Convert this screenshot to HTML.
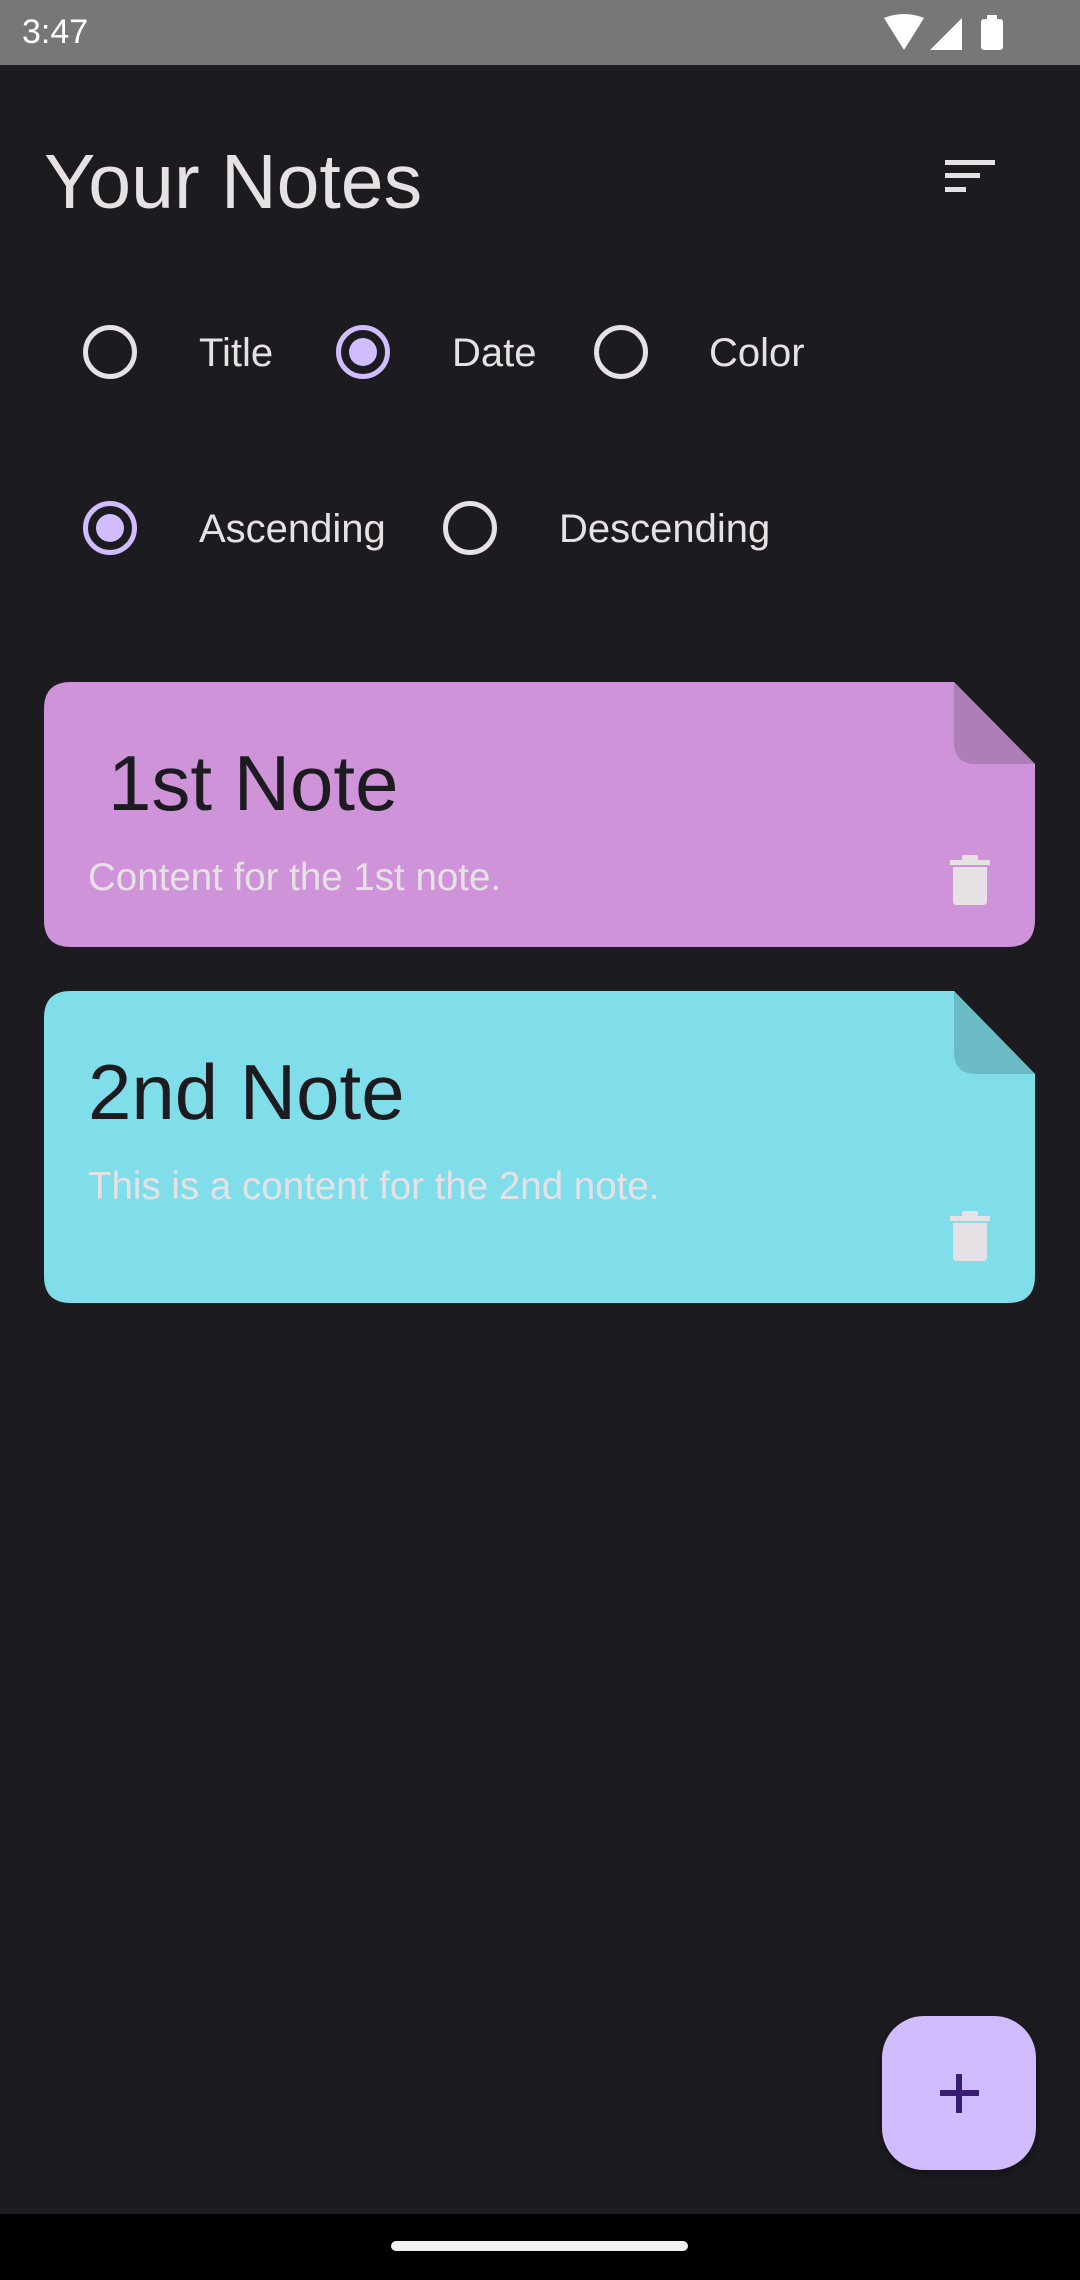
<!DOCTYPE html>
<html><head><meta charset="utf-8"><style>
*{margin:0;padding:0;box-sizing:border-box}
body{width:1080px;height:2280px;background:#1c1b1f;position:relative;overflow:hidden;font-family:"Liberation Sans",sans-serif}
.a{position:absolute}
.t{white-space:nowrap;line-height:1}
.radio{position:absolute;width:54px;height:54px;border-radius:50%;border:5px solid #e6e1e5}
.radio.on{border-color:#d0bcff}
.radio.on::after{content:"";position:absolute;left:8px;top:8px;width:28px;height:28px;border-radius:50%;background:#d0bcff}
.lbl{position:absolute;color:#e6e1e5;font-size:40px;white-space:nowrap;line-height:1}
</style></head><body>
<div class="a" style="left:0;top:0;width:1080px;height:65px;background:#777"></div>
<div class="a t" style="left:22px;top:15px;font-size:34px;color:#fff">3:47</div>
<svg class="a" style="left:880px;top:14px" width="130" height="38" viewBox="0 0 130 38">
<path d="M4 4 Q24 -4 44 4 L24 36 Z" fill="#fff"/>
<path d="M82 4 L82 36 L50 36 Z" fill="#fff"/>
<rect x="101" y="5" width="22" height="31" rx="3" fill="#fff"/><rect x="107" y="1" width="10" height="5" fill="#fff"/>
</svg>
<div class="a t" style="left:44px;top:144px;font-size:77px;color:#e6e1e5">Your Notes</div>
<div class="a" style="left:945px;top:160px;width:50px;height:5px;background:#e6e1e5"></div>
<div class="a" style="left:945px;top:173px;width:35px;height:5px;background:#e6e1e5"></div>
<div class="a" style="left:945px;top:187px;width:21px;height:5px;background:#e6e1e5"></div>

<div class="radio" style="left:83px;top:325px"></div><div class="lbl" style="left:199px;top:333px">Title</div>
<div class="radio on" style="left:336px;top:325px"></div><div class="lbl" style="left:452px;top:333px">Date</div>
<div class="radio" style="left:594px;top:325px"></div><div class="lbl" style="left:709px;top:333px">Color</div>
<div class="radio on" style="left:83px;top:501px"></div><div class="lbl" style="left:199px;top:509px">Ascending</div>
<div class="radio" style="left:443px;top:501px"></div><div class="lbl" style="left:559px;top:509px">Descending</div>

<svg class="a" style="left:44px;top:682px" width="991" height="265">
<path d="M27 0 H910 L991 82 V238 Q991 265 964 265 H27 Q0 265 0 238 V27 Q0 0 27 0 Z" fill="#ce93d8"/>
<path d="M910 0 L991 82 H932 Q910 82 910 60 Z" fill="#ad7eb8"/>
</svg>
<div class="a t" style="left:108px;top:744px;font-size:78px;color:#1c1b1f">1st Note</div>
<div class="a t" style="left:88px;top:859px;font-size:38.5px;color:#e6e1e5">Content for the 1st note.</div>
<svg class="a" style="left:950px;top:855px" width="40" height="50" viewBox="0 0 40 50"><rect x="0" y="5" width="40" height="5" fill="#e6e1e5"/><rect x="12" y="0" width="16" height="6" rx="2" fill="#e6e1e5"/><path d="M3 12 H37 V46 Q37 50 33 50 H7 Q3 50 3 46 Z" fill="#e6e1e5"/></svg>

<svg class="a" style="left:44px;top:991px" width="991" height="312">
<path d="M27 0 H910 L991 83 V285 Q991 312 964 312 H27 Q0 312 0 285 V27 Q0 0 27 0 Z" fill="#80deea"/>
<path d="M910 0 L991 83 H932 Q910 83 910 61 Z" fill="#6bbbc6"/>
</svg>
<div class="a t" style="left:88px;top:1053px;font-size:78px;color:#1c1b1f">2nd Note</div>
<div class="a t" style="left:88px;top:1168px;font-size:38.5px;color:#e6e1e5">This is a content for the 2nd note.</div>
<svg class="a" style="left:950px;top:1211px" width="40" height="50" viewBox="0 0 40 50"><rect x="0" y="5" width="40" height="5" fill="#e6e1e5"/><rect x="12" y="0" width="16" height="6" rx="2" fill="#e6e1e5"/><path d="M3 12 H37 V46 Q37 50 33 50 H7 Q3 50 3 46 Z" fill="#e6e1e5"/></svg>

<div class="a" style="left:882px;top:2016px;width:154px;height:154px;border-radius:42px;background:#d0bcff;box-shadow:0 4px 10px rgba(0,0,0,.35)"></div>
<div class="a" style="left:940px;top:2090px;width:39px;height:6px;background:#381e72"></div>
<div class="a" style="left:956px;top:2074px;width:6px;height:39px;background:#381e72"></div>

<div class="a" style="left:0;top:2214px;width:1080px;height:66px;background:#000"></div>
<div class="a" style="left:391px;top:2241px;width:297px;height:10px;border-radius:5px;background:#f2f2f2"></div>
</body></html>
